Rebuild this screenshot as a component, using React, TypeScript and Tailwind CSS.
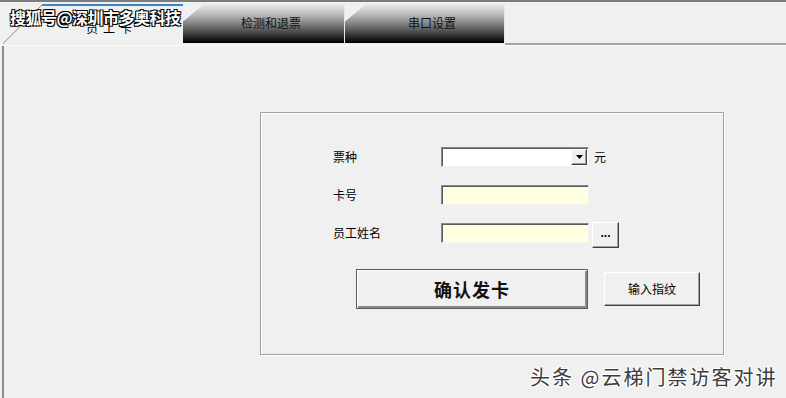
import { ReactNode } from 'react';

const font = { fontFamily: '"Noto Sans CJK SC", "Noto Sans", sans-serif' };

function SlantTab({ label, width }: { label: string; width: string }) {
  return (
    <div
      className={`relative h-[39px] ${width} bg-[linear-gradient(to_bottom,#ececec_0%,#b4b4b4_30%,#6a6a6a_60%,#000_100%)] [clip-path:polygon(0_100%,0_45%,21px_0,100%_0,100%_100%)]`}
    >
      <div className="absolute inset-0 flex items-center justify-center pb-[2px] pl-[14px] text-[12px] text-[#111]">
        {label}
      </div>
      <div className="absolute right-0 top-[2px] bottom-0 w-px bg-[#e8e8e8]" />
    </div>
  );
}

function Raised({ className, children }: { className: string; children?: ReactNode }) {
  return (
    <div
      className={`flex items-center justify-center border border-t-white border-l-white border-r-[#404040] border-b-[#404040] bg-[#f0f0f0] shadow-[inset_-1px_-1px_0_#a0a0a0] ${className}`}
    >
      {children}
    </div>
  );
}

function Sunken({ className, children }: { className: string; children?: ReactNode }) {
  return (
    <div
      className={`relative border border-t-[#8a8a8a] border-l-[#8a8a8a] border-r-[#f4f4f4] border-b-[#f4f4f4] shadow-[inset_1px_1px_0_#5a5a5a] ${className}`}
    >
      {children}
    </div>
  );
}

export default function App() {
  return (
    <div className="relative flex h-[398px] w-[786px] flex-col overflow-hidden bg-[#f0f0f0]" style={font}>
      <div className="h-[2px] bg-[#7c7c7c]" />
      {/* tabs */}
      <div className="flex h-[41px] items-end pl-[2px]">
        <div className="relative h-[40px] w-[181px] bg-[#f0f0f0]">
          <div className="absolute left-[40px] right-0 top-[1px] h-[2px] bg-[#3a86c4]" />
          <svg className="absolute left-0 top-0" width="42" height="41">
            <line x1="0.5" y1="41" x2="41" y2="1" stroke="#8c8c8c" strokeWidth="1" />
          </svg>
          <div className="absolute left-[84px] top-[16px] text-[12px] tracking-[5px] text-black">员工卡</div>
        </div>
        <SlantTab label="检测和退票" width="w-[162px]" />
        <SlantTab label="串口设置" width="w-[160px]" />
        <div className="flex-1 self-stretch" />
      </div>
      <div className="ml-[505px] h-[2px] bg-[#a2a2a2]" />
      <div className="h-px bg-[#fafafa]" />

      {/* content */}
      <div className="ml-[2px] flex-1 border-l-2 border-[#8a8a8a] pl-[256px] pt-[66px]">
        <div className="h-[243px] w-[464px] border border-[#a0a0a0] shadow-[1px_1px_0_#ffffff,inset_1px_1px_0_#ffffff]">
          <div className="flex flex-col gap-[18px] pl-[72px] pt-[34px] text-[12px] text-black">
            <div className="flex h-[20px] items-center">
              <span className="w-[108px]">票种</span>
              <Sunken className="h-[20px] w-[148px] bg-white">
                <Raised className="absolute right-[1px] top-[1px] h-[16px] w-[16px]">
                  <svg width="7" height="4" viewBox="0 0 7 4">
                    <path d="M0 0h7L3.5 4z" fill="#000" />
                  </svg>
                </Raised>
              </Sunken>
              <span className="ml-[5px]">元</span>
            </div>
            <div className="flex h-[20px] items-center">
              <span className="w-[108px]">卡号</span>
              <Sunken className="h-[20px] w-[148px] bg-[#ffffe1]" />
            </div>
            <div className="flex items-start">
              <span className="flex h-[20px] w-[108px] items-center">员工姓名</span>
              <Sunken className="h-[20px] w-[148px] bg-[#ffffe1]" />
              <Raised className="-mt-[1px] ml-[3px] h-[26px] w-[27px] pb-[4px] font-['Liberation_Sans',sans-serif] text-[12px] font-bold">
                ...
              </Raised>
            </div>
          </div>
          <div className="mt-[21px] flex items-center gap-[16px] pl-[95px]">
            <div className="flex h-[40px] w-[232px] items-center justify-center border border-[#5c5c5c] bg-[#f0f0f0] shadow-[inset_1px_1px_0_#ffffff,inset_-2px_-2px_0_#8a8a8a] text-[18px] font-bold tracking-[1px] text-[#111]">
              确认发卡
            </div>
            <Raised className="h-[34px] w-[96px] text-[12px] text-black">输入指纹</Raised>
          </div>
        </div>
      </div>

      {/* watermarks */}
      <div className="absolute left-[10px] top-[5px] text-[16px] font-bold tracking-[-0.5px] text-white [text-shadow:1px_1px_0_#000,-1px_-1px_0_#000,1px_-1px_0_#000,-1px_1px_0_#000]">
        搜狐号@深圳市多奥科技
      </div>
      <div className="absolute left-[530px] top-[362px] text-[20px] tracking-[2px] text-[#3c3c3c] [text-shadow:1px_1px_0_#fff,-1px_-1px_0_#fff,1px_-1px_0_#fff,-1px_1px_0_#fff]">
        头条 @云梯门禁访客对讲
      </div>
    </div>
  );
}
